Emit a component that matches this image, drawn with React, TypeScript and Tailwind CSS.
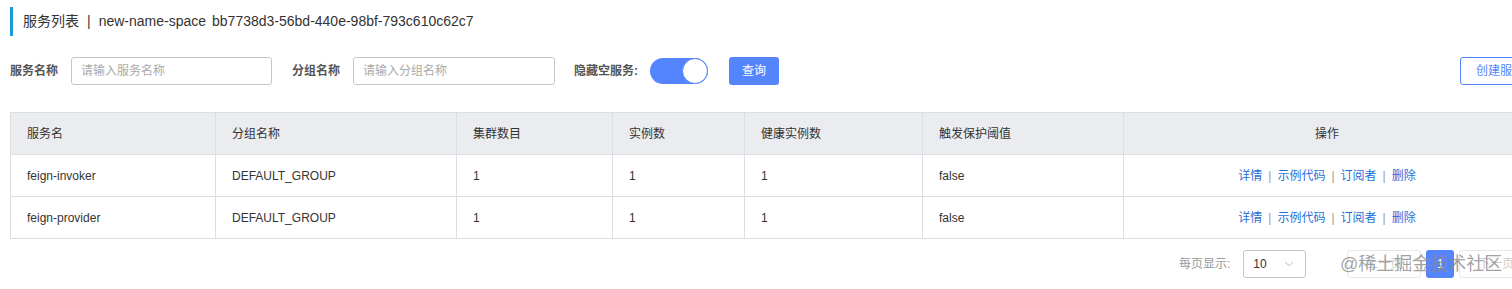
import { ChevronDown } from "lucide-react";

const font = "font-['Liberation_Sans','Noto_Sans_CJK_SC',sans-serif]";

const columns = [
  { title: "服务名", w: "w-[205px]" },
  { title: "分组名称", w: "w-[241px]" },
  { title: "集群数目", w: "w-[156px]" },
  { title: "实例数", w: "w-[132px]" },
  { title: "健康实例数", w: "w-[178px]" },
  { title: "触发保护阈值", w: "w-[201px]" },
];

const rows = [
  ["feign-invoker", "DEFAULT_GROUP", "1", "1", "1", "false"],
  ["feign-provider", "DEFAULT_GROUP", "1", "1", "1", "false"],
];

const actions = ["详情", "示例代码", "订阅者", "删除"];

function Actions() {
  return (
    <div className="flex items-center justify-center text-[12px] text-[#1f6fd8]">
      {actions.map((a, i) => (
        <span key={a} className="flex items-center">
          {i > 0 && <span className="mx-[6px] text-[#999]">|</span>}
          <a href="#" className="hover:underline">{a}</a>
        </span>
      ))}
    </div>
  );
}

export default function App() {
  return (
    <div className={`w-[1512px] h-[289px] overflow-hidden bg-white ${font}`}>
      <div className="w-[1560px] pl-[10px] pt-[7px]">
        {/* title */}
        <div className="flex h-[29px] items-center border-l-[3px] border-[#1b9bd6] pl-[10px] text-[14px] text-[#333]">
          <span>服务列表</span>
          <span className="mx-[8px]">|</span>
          <span>new-name-space</span>
          <span className="ml-[6px]">bb7738d3-56bd-440e-98bf-793c610c62c7</span>
        </div>

        {/* filters */}
        <div className="mt-[21px] flex h-[28px] items-center text-[12px]">
          <label className="w-[61px] font-bold text-[#555]">服务名称</label>
          <input
            className="h-[28px] w-[201px] rounded-[3px] border border-[#c4c6cf] px-[9px] text-[12px] outline-none placeholder:text-[#aaa]"
            placeholder="请输入服务名称"
          />
          <label className="ml-[20px] w-[61px] font-bold text-[#555]">分组名称</label>
          <input
            className="h-[28px] w-[202px] rounded-[3px] border border-[#c4c6cf] px-[9px] text-[12px] outline-none placeholder:text-[#aaa]"
            placeholder="请输入分组名称"
          />
          <label className="ml-[19px] font-bold text-[#555]">隐藏空服务:</label>
          <div className="ml-[12px] flex h-[26px] w-[58px] items-center justify-end rounded-full bg-[#5584ff]">
            <div className="h-[26px] w-[26px] rounded-full border border-[#5584ff] bg-white" />
          </div>
          <button className="ml-[21px] h-[28px] w-[50px] rounded-[3px] bg-[#5584ff] text-[12px] text-white">查询</button>
          <button className="ml-[681px] h-[28px] w-[80px] rounded-[3px] border border-[#5584ff] text-[12px] text-[#5584ff]">创建服务</button>
        </div>

        {/* table */}
        <div className="mt-[27px] w-[1520px] border-t border-l border-[#dcdee3] text-[12px] text-[#333]">
          <div className="flex h-[42px] border-b border-[#dcdee3] bg-[#ebecf0]">
            {columns.map((c) => (
              <div key={c.title} className={`${c.w} flex items-center border-r border-[#dcdee3] px-[16px]`}>{c.title}</div>
            ))}
            <div className="flex flex-1 items-center justify-center">操作</div>
          </div>
          {rows.map((r) => (
            <div key={r[0]} className="flex h-[42px] border-b border-[#dcdee3]">
              {r.map((v, i) => (
                <div key={i} className={`${columns[i].w} flex items-center border-r border-[#dcdee3] px-[16px]`}>{v}</div>
              ))}
              <div className="flex flex-1 items-center justify-center">
                <Actions />
              </div>
            </div>
          ))}
        </div>

        {/* pagination */}
        <div className="relative mt-[11px] flex h-[28px] items-center text-[12px]">
          <span className="ml-[1169px] text-[#999]">每页显示:</span>
          <div className="ml-[13px] flex h-[28px] w-[63px] items-center justify-between rounded-[3px] border border-[#c4c6cf] px-[9px] text-[#333]">
            <span>10</span>
            <ChevronDown size={14} strokeWidth={1.2} className="text-[#999]" />
          </div>
          <button className="ml-[41px] h-[28px] w-[74px] rounded-[3px] border border-[#e6e7eb] text-[#ccc]">上一页</button>
          <button className="ml-[5px] h-[28px] w-[28px] rounded-[3px] bg-[#5584ff] text-white">1</button>
          <button className="ml-[5px] h-[28px] w-[74px] rounded-[3px] border border-[#e6e7eb] text-[#ccc]">下一页</button>
          <span className="pointer-events-none absolute left-[1330px] top-[1px] text-[18px] text-[#8a8a8a]/80">@稀土掘金技术社区</span>
        </div>
      </div>
    </div>
  );
}
